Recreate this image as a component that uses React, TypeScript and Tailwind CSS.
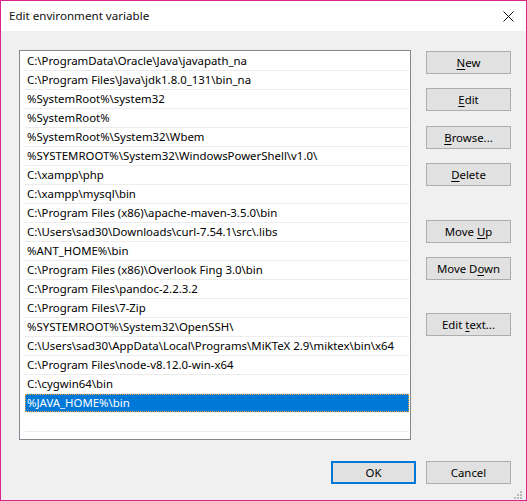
import React from 'react';

const paths: string[] = [
    'C:\\ProgramData\\Oracle\\Java\\javapath_na',
    'C:\\Program Files\\Java\\jdk1.8.0_131\\bin_na',
    '%SystemRoot%\\system32',
    '%SystemRoot%',
    '%SystemRoot%\\System32\\Wbem',
    '%SYSTEMROOT%\\System32\\WindowsPowerShell\\v1.0\\',
    'C:\\xampp\\php',
    'C:\\xampp\\mysql\\bin',
    'C:\\Program Files (x86)\\apache-maven-3.5.0\\bin',
    'C:\\Users\\sad30\\Downloads\\curl-7.54.1\\src\\.libs',
    '%ANT_HOME%\\bin',
    'C:\\Program Files (x86)\\Overlook Fing 3.0\\bin',
    'C:\\Program Files\\pandoc-2.2.3.2',
    'C:\\Program Files\\7-Zip',
    '%SYSTEMROOT%\\System32\\OpenSSH\\',
    'C:\\Users\\sad30\\AppData\\Local\\Programs\\MiKTeX 2.9\\miktex\\bin\\x64',
    'C:\\Program Files\\node-v8.12.0-win-x64',
    'C:\\cygwin64\\bin',
    '%JAVA_HOME%\\bin',
];

const selected = paths.length - 1;

// label before, mnemonic letter, label after
const sideButtons: { pre: string; key: string; post: string; mt: string }[] = [
    { pre: '', key: 'N', post: 'ew', mt: 'mt-0' },
    { pre: '', key: 'E', post: 'dit', mt: 'mt-[14px]' },
    { pre: '', key: 'B', post: 'rowse...', mt: 'mt-[15px]' },
    { pre: '', key: 'D', post: 'elete', mt: 'mt-[14px]' },
    { pre: 'Move ', key: 'U', post: 'p', mt: 'mt-[34px]' },
    { pre: 'Move D', key: 'o', post: 'wn', mt: 'mt-[14px]' },
    { pre: 'Edit ', key: 't', post: 'ext...', mt: 'mt-[33px]' },
];

const EditEnvVar: React.FC = () => {
    return (
        <div className="w-[527px] h-[501px] border border-[#d9268a] flex flex-col bg-[#f0f0f0] text-[11.4px] text-black font-['Noto_Sans',sans-serif] overflow-hidden">
            <div className="h-[30px] shrink-0 bg-white flex items-center justify-between pl-[8px] pr-[12px]">
                <span className="text-[11.6px] text-[#111]">Edit environment variable</span>
                <svg width="11" height="11" viewBox="0 0 11 11" className="mt-[1px]">
                    <path d="M0.5 0.5 L10.5 10.5 M10.5 0.5 L0.5 10.5" stroke="#111" strokeWidth="1" fill="none" />
                </svg>
            </div>

            <div className="flex-1 flex flex-col pl-[18px] pr-[15px] pt-[19px]">
                <div className="flex">
                    <div className="w-[392px] h-[390px] border border-[#828790] bg-white pt-[1px] pl-[5px] pr-[1px] overflow-hidden">
                        {paths.map((p, i) => (
                            <div key={i} className="h-[19px] border-b border-[#ececec]">
                                {i === selected ? (
                                    <div className="h-[18px] bg-[#0078d7] text-white border border-dotted border-[#e8a33a] pl-[1px] leading-[16px] whitespace-nowrap">
                                        {p}
                                    </div>
                                ) : (
                                    <div className="h-[18px] pl-[2px] leading-[18px] whitespace-nowrap">{p}</div>
                                )}
                            </div>
                        ))}
                        <div className="h-[19px] border-b border-[#ececec]"></div>
                    </div>

                    <div className="flex flex-col ml-[15px] pt-[1px]">
                        {sideButtons.map(b => (
                            <button
                                key={b.pre + b.key + b.post}
                                className={`${b.mt} w-[85px] h-[23px] bg-[#e1e1e1] border border-[#adadad] text-center leading-[21px] whitespace-pre`}
                            >
                                {b.pre}<span className="underline underline-offset-2">{b.key}</span>{b.post}
                            </button>
                        ))}
                    </div>
                </div>

                <div className="flex justify-end gap-[10px] mt-[21px]">
                    <button className="w-[85px] h-[23px] bg-[#e1e1e1] border-2 border-[#0078d7] text-center leading-[19px]">
                        OK
                    </button>
                    <button className="w-[85px] h-[23px] bg-[#e1e1e1] border border-[#adadad] text-center leading-[21px]">
                        Cancel
                    </button>
                </div>

                <div className="flex justify-end mt-[6px] mr-[-12px]">
                    <svg width="10" height="10" viewBox="0 0 10 10">
                        <rect x="7" y="1" width="2" height="2" fill="#b8b8b8" />
                        <rect x="4" y="4" width="2" height="2" fill="#b8b8b8" />
                        <rect x="7" y="4" width="2" height="2" fill="#b8b8b8" />
                        <rect x="1" y="7" width="2" height="2" fill="#b8b8b8" />
                        <rect x="4" y="7" width="2" height="2" fill="#b8b8b8" />
                        <rect x="7" y="7" width="2" height="2" fill="#b8b8b8" />
                    </svg>
                </div>
            </div>
        </div>
    );
};

export default EditEnvVar;
